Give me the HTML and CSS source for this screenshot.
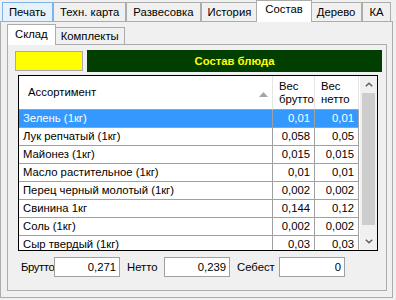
FILE: index.html
```html
<!DOCTYPE html>
<html>
<head>
<meta charset="utf-8">
<link rel="stylesheet" href="styles.css">
</head>
<body>
<div class="tabs">
  <div class="tab hover">Печать</div>
  <div class="tab">Техн. карта</div>
  <div class="tab">Развесовка</div>
  <div class="tab">История</div>
  <div class="tab active">Состав</div>
  <div class="tab">Дерево</div>
  <div class="tab">КА</div>
</div>
<div class="panel">
  <div class="subtabs">
    <div class="subtab active">Склад</div>
    <div class="subtab">Комплекты</div>
  </div>
  <div class="subpanel">
    <div class="topbar">
      <div class="yellow"></div>
      <div class="title">Состав блюда</div>
    </div>
    <div class="grid">
      <div class="grid-body">
        <table class="tbl">
          <colgroup><col class="c1"><col class="c2"><col class="c3"></colgroup>
          <thead>
            <tr>
              <th class="h-name"><div class="h-name-in"><span>Ассортимент</span><svg class="sort" width="9" height="5" viewBox="0 0 9 5"><polygon points="0,5 4.5,0 9,5" fill="#a6a6a6"/></svg></div></th>
              <th class="h-num">Вес<br>брутто</th>
              <th class="h-num">Вес<br>нетто</th>
            </tr>
          </thead>
          <tbody>
            <tr class="sel"><td>Зелень (1кг)</td><td class="n">0,01</td><td class="n">0,01</td></tr>
            <tr><td>Лук репчатый (1кг)</td><td class="n">0,058</td><td class="n">0,05</td></tr>
            <tr><td>Майонез (1кг)</td><td class="n">0,015</td><td class="n">0,015</td></tr>
            <tr><td>Масло растительное (1кг)</td><td class="n">0,01</td><td class="n">0,01</td></tr>
            <tr><td>Перец черный молотый (1кг)</td><td class="n">0,002</td><td class="n">0,002</td></tr>
            <tr><td>Свинина 1кг</td><td class="n">0,144</td><td class="n">0,12</td></tr>
            <tr><td>Соль (1кг)</td><td class="n">0,002</td><td class="n">0,002</td></tr>
            <tr><td>Сыр твердый (1кг)</td><td class="n">0,03</td><td class="n">0,03</td></tr>
          </tbody>
        </table>
      </div>
      <div class="scrollbar">
        <div class="sb-btn"><svg width="8" height="5" viewBox="0 0 8 5"><polyline points="0.8,4.3 4,1.2 7.2,4.3" fill="none" stroke="#606060" stroke-width="1.5"/></svg></div>
        <div class="sb-thumb"></div>
        <div class="sb-track"></div>
        <div class="sb-btn"><svg width="8" height="5" viewBox="0 0 8 5"><polyline points="0.8,0.7 4,3.8 7.2,0.7" fill="none" stroke="#606060" stroke-width="1.5"/></svg></div>
      </div>
    </div>
    <div class="totals">
      <span class="lbl lbl-b">Брутто</span><div class="box">0,271</div>
      <span class="lbl lbl-n">Нетто</span><div class="box">0,239</div>
      <span class="lbl lbl-s">Себест</span><div class="box">0</div>
    </div>
  </div>
</div>
</body>
</html>
```
FILE: styles.css
```css
* { box-sizing: border-box; }
html, body { margin: 0; padding: 0; }
body {
  width: 396px;
  height: 300px;
  overflow: hidden;
  background: #f0f0f0;
  font-family: "Liberation Sans", Arial, sans-serif;
  font-size: 11.3px;
  color: #000;
}
.tabs {
  display: flex;
  align-items: flex-end;
  height: 21px;
  padding-left: 2px;
  position: relative;
  z-index: 2;
}
.tab {
  height: 19px;
  line-height: 18px;
  padding: 0 6px;
  border: 1px solid #acacac;
  border-bottom: 0;
  background: #f0f0f0;
  white-space: nowrap;
}
.tab.hover {
  background: #e5f1fb;
  border-color: #7eb4ea;
}
.tab.active {
  height: 22px;
  line-height: 17px;
  margin: 0 -2px -1px -2px;
  padding: 0 8px;
  background: #fff;
  position: relative;
  z-index: 3;
}
.panel {
  width: 393px;
  height: 277px;
  border: 1px solid #acacac;
  background: #f0f0f0;
  padding: 0 5px 6px 6px;
  position: relative;
  z-index: 1;
}
.subtabs {
  display: flex;
  align-items: flex-end;
  height: 22px;
  padding-left: 2px;
  position: relative;
  z-index: 2;
}
.subtab {
  height: 17px;
  line-height: 16px;
  padding: 0 5px;
  border: 1px solid #acacac;
  border-bottom: 0;
  background: #f0f0f0;
}
.subtab.active {
  height: 21px;
  line-height: 18px;
  margin: 0 -1px -1px -2px;
  padding: 0 7px;
  background: #fff;
  position: relative;
  z-index: 3;
}
.subpanel {
  height: 247px;
  border: 1px solid #acacac;
  background: #f0f0f0;
  position: relative;
  z-index: 1;
}
.topbar {
  display: flex;
  align-items: center;
  gap: 4px;
  margin: 5px 4px 0 7px;
  height: 22px;
}
.yellow {
  width: 68px;
  height: 20px;
  background: #ffff00;
  border: 1px solid #a9a9a9;
}
.title {
  flex: 1;
  height: 22px;
  line-height: 22px;
  background: #003f00;
  color: #ffff00;
  font-weight: bold;
  text-align: center;
}
.grid {
  display: flex;
  margin: 3px 0 0 10px;
  width: 360px;
  height: 176px;
  border: 1px solid #000;
  background: #fff;
}
.grid-body {
  width: 341px;
  height: 174px;
  overflow: hidden;
}
.tbl {
  border-collapse: separate;
  border-spacing: 0;
  table-layout: fixed;
  width: 340px;
}
.c1 { width: 254px; }
.c2 { width: 42px; }
.c3 { width: 44px; }
.tbl th {
  height: 34px;
  padding: 0;
  font-weight: normal;
  text-align: left;
  background: #fff;
  border-right: 1px solid #e5e5e5;
  border-bottom: 1px solid #a0a0a0;
  line-height: 13px;
}
.h-name-in {
  display: flex;
  align-items: center;
  justify-content: space-between;
  padding: 0 4px 0 9px;
}
.sort { margin-top: 4px; }
.tbl th.h-num { padding-left: 6px; }
.tbl td {
  height: 18px;
  padding: 0 0 0 4px;
  border-right: 1px solid #a0a0a0;
  border-bottom: 1px solid #a0a0a0;
  white-space: nowrap;
  overflow: hidden;
  line-height: 17px;
}
.tbl td.n {
  text-align: right;
  padding: 0 4px 0 0;
}
.tbl tr.sel td {
  background: #3399ff;
  color: #fff;
}
.scrollbar {
  width: 17px;
  margin-left: 1px;
  display: flex;
  flex-direction: column;
  background: #f0f0f0;
}
.sb-btn {
  height: 17px;
  display: flex;
  align-items: center;
  justify-content: center;
}
.sb-thumb {
  height: 132px;
  margin: 0 2px;
  background: #cdcdcd;
}
.sb-track { flex: 1; }
.totals {
  display: flex;
  align-items: center;
  margin: 6px 0 0 13px;
  height: 20px;
}
.lbl { white-space: nowrap; flex-shrink: 0; }
.lbl-b { width: 33px; letter-spacing: -0.4px; }
.lbl-n { width: 37px; margin-left: 7px; }
.lbl-s { width: 42px; margin-left: 7px; }
.box {
  width: 66px;
  height: 20px;
  line-height: 18px;
  border: 1px solid #a0a0a0;
  background: #fff;
  text-align: right;
  padding-right: 3px;
  flex-shrink: 0;
}
```
